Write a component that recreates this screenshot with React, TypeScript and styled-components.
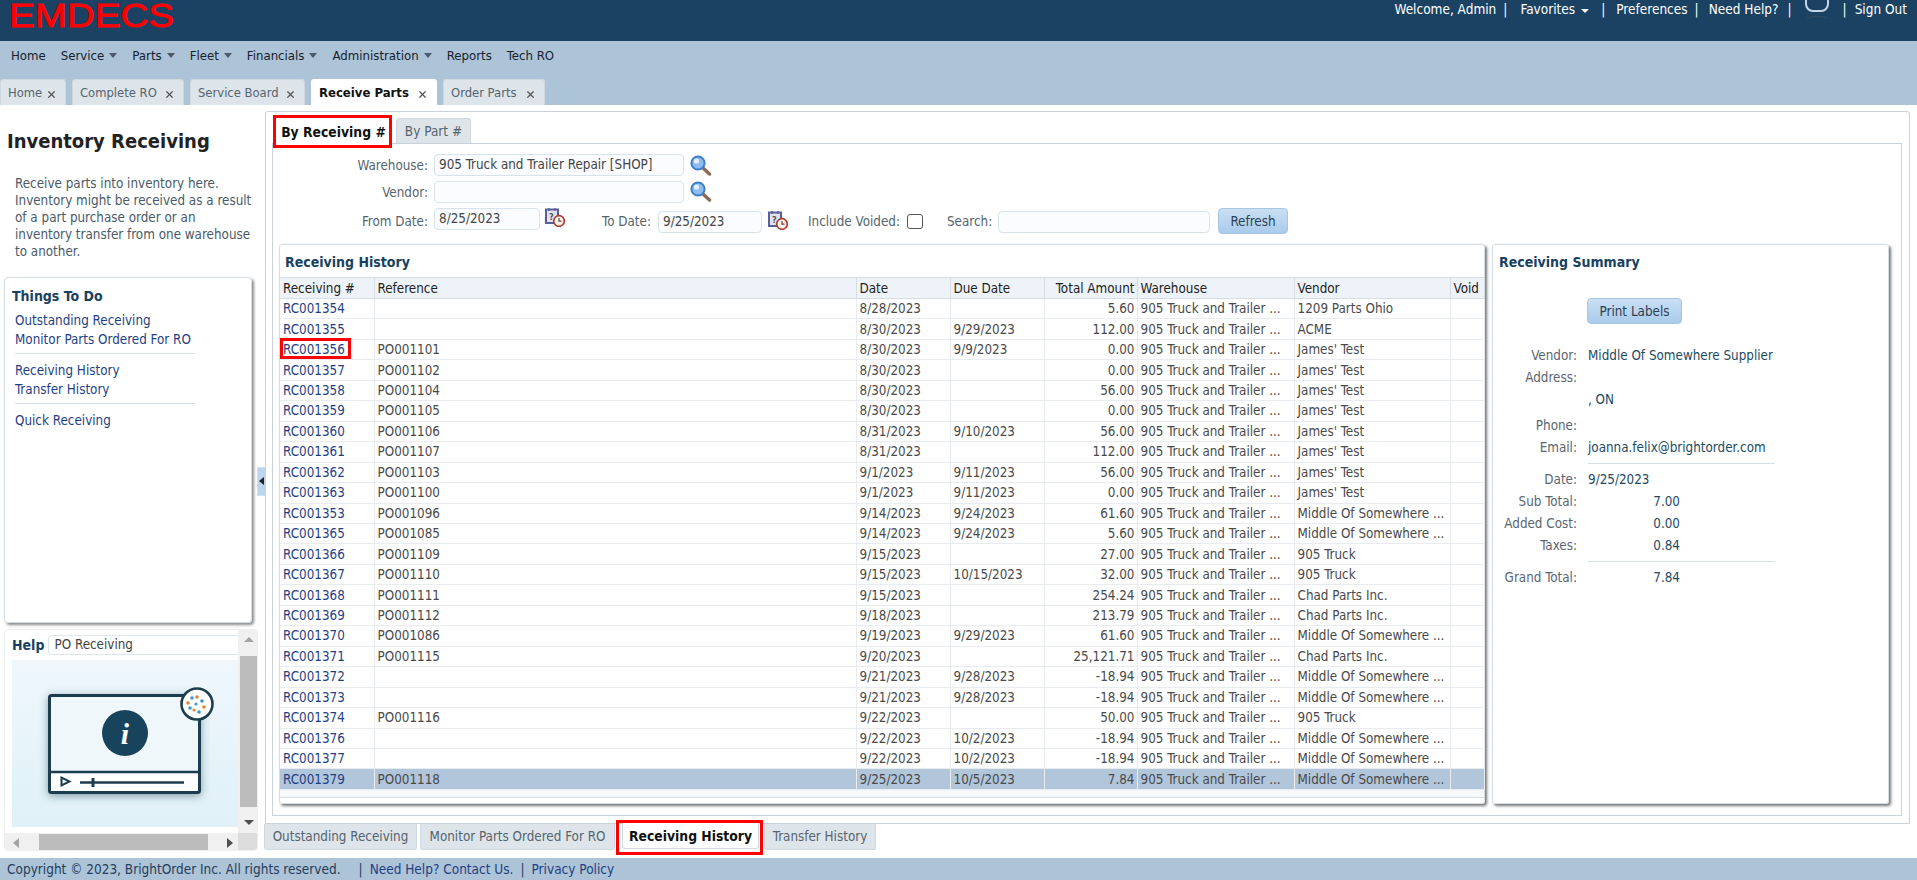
import React from 'react'
import styled, { createGlobalStyle } from 'styled-components'
import { X } from 'lucide-react'

const GlobalStyle = createGlobalStyle`
  html, body { margin: 0; padding: 0; background: #fff; }
  body {
    font-family: "DejaVu Sans Condensed", "Noto Sans", "Liberation Sans", sans-serif;
    font-stretch: condensed;
    font-size: 13.33px;
    color: #444;
  }
  * { box-sizing: border-box; }
`

const Page = styled.div`
  width: 1917px;
  height: 880px;
  display: flex;
  flex-direction: column;
  overflow: hidden;
`

const Header = styled.header`
  height: 41px;
  background: #1c4263;
  display: flex;
  justify-content: space-between;
  padding: 0 10px 0 8px;
  flex-shrink: 0;
`
const Logo = styled.svg`
  width: 172px;
  height: 34px;
  display: block;
`
const TopLinks = styled.div`
  display: flex;
  height: 14px;
  align-items: center;
  color: #fff;
  font-size: 13.5px;
  white-space: nowrap;
  margin-top: 2px;
`
const TopItem = styled.span<{ $gap?: number }>`
  margin-left: ${(p) => p.$gap ?? 0}px;
  display: inline-flex;
  align-items: center;
`
const WhiteCaret = styled.i`
  width: 0;
  height: 0;
  margin-left: 6px;
  margin-top: 3px;
  border-left: 4px solid transparent;
  border-right: 4px solid transparent;
  border-top: 4px solid #fff;
`

const Band = styled.div`
  height: 64px;
  background: #adc3d7;
  display: flex;
  flex-direction: column;
  justify-content: space-between;
  flex-shrink: 0;
`
const Menu = styled.nav`
  display: flex;
  padding: 6px 0 0 11px;
  gap: 15px;
  color: #15222e;
  font-size: 13.1px;
  line-height: 17px;
`
const MenuItem = styled.span`
  display: inline-flex;
  align-items: center;
`
const Caret = styled.i`
  width: 0;
  height: 0;
  margin-left: 5px;
  border-left: 4px solid transparent;
  border-right: 4px solid transparent;
  border-top: 5px solid #4a5a6a;
`
const PageTabs = styled.div`
  display: flex;
  gap: 6px;
`
const PageTab = styled.div<{ $active?: boolean; $width: number }>`
  width: ${(p) => p.$width}px;
  height: 26px;
  padding: 0 8px 0 7px;
  display: flex;
  align-items: center;
  justify-content: space-between;
  border-radius: 3px 3px 0 0;
  background: ${(p) => (p.$active ? '#fff' : '#dde4ea')};
  color: ${(p) => (p.$active ? '#111' : '#56646f')};
  font-weight: ${(p) => (p.$active ? 700 : 400)};
  font-size: ${(p) => (p.$active ? 13 : 12.9)}px;
  border: 1px solid ${(p) => (p.$active ? '#fff' : '#cfd8df')};
  border-bottom: 0;
  white-space: nowrap;
  svg { margin-top: 4px; color: #555; flex-shrink: 0; }
`

const Content = styled.main`
  flex: 1;
  display: flex;
  min-height: 0;
`
const Sidebar = styled.aside`
  width: 256px;
  flex-shrink: 0;
  display: flex;
  flex-direction: column;
  padding-left: 4px;
`
const SideTitle = styled.h1`
  margin: 24px 0 0 3px;
  font-size: 20px;
  line-height: 24px;
  font-weight: 700;
  color: #222;
`
const SideText = styled.p`
  margin: 22px 0 0 11px;
  width: 238px;
  line-height: 17px;
  color: #4a5a68;
`
const TodoCard = styled.section`
  width: 248px;
  height: 346px;
  margin-top: 17px;
  border: 1px solid #d5dde5;
  border-radius: 4px;
  box-shadow: 2px 2px 3px #8a8a8a;
  padding: 9px 0 0 7px;
`
const CardTitle = styled.h3`
  margin: 0;
  font-size: 14px;
  line-height: 18px;
  font-weight: 700;
  color: #17425f;
`
const TodoList = styled.div`
  margin: 6px 0 0 3px;
  width: 180px;
  display: flex;
  flex-direction: column;
`
const TodoLink = styled.a`
  color: #1f3f85;
  line-height: 19px;
  white-space: nowrap;
`
const Rule = styled.hr`
  margin: 4px 0 7px;
  border: 0;
  border-top: 1px solid #d5dde5;
  width: 100%;
`
const HelpPanel = styled.section`
  width: 254px;
  height: 222px;
  margin-top: 6px;
  display: grid;
  grid-template-columns: 233px 21px;
  grid-template-rows: 203px 19px;
  border: 1px solid #eceff2;
  border-radius: 4px;
  overflow: hidden;
  flex-shrink: 0;
`
const HelpBody = styled.div`
  overflow: hidden;
  padding: 5px 0 0 7px;
`
const HelpHead = styled.div`
  display: flex;
  align-items: center;
  gap: 4px;
  height: 20px;
`
const HelpLabel = styled.b`
  font-size: 14px;
  color: #17425f;
`
const HelpSelect = styled.div`
  flex: 1;
  height: 20px;
  border: 1px solid #dde6ee;
  border-right: 0;
  border-radius: 4px 0 0 4px;
  padding-left: 5px;
  line-height: 18px;
  color: #444;
`
const VideoBox = styled.div`
  margin-top: 5px;
  height: 167px;
  width: 226px;
  background: linear-gradient(#eff7fd, #dff1f7);
`
const VScroll = styled.div`
  background: #f0f0f0;
  display: flex;
  flex-direction: column;
  align-items: center;
  justify-content: space-between;
  padding: 7px 0 8px;
`
const VThumb = styled.div`
  width: 17px;
  height: 151px;
  background: #bcbcbc;
`
const HScroll = styled.div`
  background: #f0f0f0;
  display: flex;
  align-items: center;
  justify-content: space-between;
  padding: 0 5px 0 8px;
`
const HThumb = styled.div`
  width: 169px;
  height: 17px;
  background: #bcbcbc;
`
const Corner = styled.div`
  background: #dcdcdc;
`
const Arrow = styled.i<{ $dir: 'up' | 'down' | 'left' | 'right'; $light?: boolean }>`
  width: 0;
  height: 0;
  border: 5px solid transparent;
  ${(p) => {
    const c = p.$light ? '#a3a3a3' : '#505050'
    if (p.$dir === 'up') return `border-bottom: 5px solid ${c}; border-top: 0;`
    if (p.$dir === 'down') return `border-top: 5px solid ${c}; border-bottom: 0;`
    if (p.$dir === 'left') return `border-right: 6px solid ${c}; border-left: 0;`
    return `border-left: 6px solid ${c}; border-right: 0;`
  }}
`
const Handle = styled.div`
  width: 9px;
  height: 29px;
  align-self: center;
  margin: -1px -1px 0 1px;
  background: #bcd4ec;
  border: 1px solid #cfe0f0;
  display: flex;
  align-items: center;
  justify-content: center;
  flex-shrink: 0;
`
const HandleArrow = styled.i`
  width: 0;
  height: 0;
  border-top: 4px solid transparent;
  border-bottom: 4px solid transparent;
  border-right: 5px solid #222;
`

const MainColumn = styled.div`
  width: 1645px;
  padding-top: 6px;
  display: flex;
  flex-direction: column;
`
const OuterPanel = styled.div`
  height: 713px;
  border: 1px solid #c9d2da;
  border-radius: 3px 3px 0 0;
  padding: 6px 7px 7px 6px;
  display: flex;
  flex-direction: column;
`
const SubTabs = styled.div`
  display: flex;
  height: 25px;
  padding-left: 2px;
  gap: 7px;
  flex-shrink: 0;
`
const SubTab = styled.div<{ $active?: boolean }>`
  position: relative;
  width: ${(p) => (p.$active ? '115px' : '75px')};
  height: ${(p) => (p.$active ? '26px' : '25px')};
  padding-left: ${(p) => (p.$active ? '4px' : 0)};
  display: flex;
  align-items: center;
  justify-content: center;
  border-radius: 3px 3px 0 0;
  background: ${(p) => (p.$active ? '#fff' : '#dde4ea')};
  color: ${(p) => (p.$active ? '#111' : '#56646f')};
  font-weight: ${(p) => (p.$active ? 700 : 400)};
  font-size: ${(p) => (p.$active ? 13.8 : 13.5)}px;
  border: 1px solid ${(p) => (p.$active ? '#fff' : '#cfd8df')};
  border-bottom: 0;
  white-space: nowrap;
  z-index: 1;
`
const RedBox = styled.span<{ $inset: string }>`
  position: absolute;
  inset: ${(p) => p.$inset};
  border: 3px solid #f00;
  pointer-events: none;
`
const InnerPanel = styled.div`
  flex: 1;
  border: 1px solid #c9d2da;
  display: flex;
  flex-direction: column;
  padding: 10px 12px 11px 6px;
  min-height: 0;
`
const Form = styled.div`
  display: flex;
  flex-direction: column;
  gap: 5px;
  height: 90px;
  flex-shrink: 0;
`
const FormRow = styled.div`
  display: flex;
  align-items: flex-start;
`
const FieldLabel = styled.label<{ $width?: number; $ml?: number; $mt?: number }>`
  width: ${(p) => (p.$width ? `${p.$width}px` : 'auto')};
  margin-left: ${(p) => p.$ml ?? 0}px;
  margin-top: ${(p) => p.$mt ?? 3}px;
  text-align: right;
  color: #56646f;
  line-height: 17px;
  white-space: nowrap;
`
const TextInput = styled.div<{ $width: number; $ml?: number; $mt?: number }>`
  width: ${(p) => p.$width}px;
  height: 22px;
  margin-left: ${(p) => p.$ml ?? 6}px;
  margin-top: ${(p) => p.$mt ?? 0}px;
  border: 1px solid #d7e3ec;
  border-radius: 4px;
  background: #fafcff;
  padding-left: 4px;
  line-height: 20px;
  color: #444;
  white-space: nowrap;
`
const IconWrap = styled.span<{ $ml: number; $mt?: number }>`
  display: block;
  margin-left: ${(p) => p.$ml}px;
  margin-top: ${(p) => p.$mt ?? 0}px;
  line-height: 0;
`
const CheckBox = styled.span`
  width: 16px;
  height: 15px;
  margin: 6px 0 0 7px;
  border: 1px solid #555;
  border-radius: 3px;
  background: #fff;
`
const Button = styled.button<{ $width: number; $ml?: number }>`
  width: ${(p) => p.$width}px;
  height: 26px;
  margin-left: ${(p) => p.$ml ?? 0}px;
  border: 1px solid #a6c6e4;
  border-radius: 4px;
  background: linear-gradient(#c9dff4, #a9cbec);
  color: #2c4052;
  font: inherit;
  padding: 0;
`
const Panels = styled.div`
  flex: 1;
  display: flex;
  gap: 7px;
  min-height: 0;
`
const HistoryPanel = styled.section`
  width: 1206px;
  border: 1px solid #d5dde5;
  border-radius: 3px;
  box-shadow: 2px 2px 3px #777;
  display: flex;
  flex-direction: column;
`
const PanelTitle = styled.h3`
  margin: 0;
  height: 32px;
  line-height: 35px;
  padding-left: 5px;
  font-size: 14px;
  font-weight: 700;
  color: #17425f;
  flex-shrink: 0;
`
const Table = styled.table`
  width: 1204px;
  table-layout: fixed;
  border-collapse: collapse;
`
const Th = styled.th<{ $right?: boolean }>`
  height: 21px;
  padding: 0 2px 0 3px;
  background: #eef2f9;
  border-top: 1px solid #d5dde5;
  border-bottom: 1px solid #d5dde5;
  border-right: 1px solid #d5dde5;
  text-align: ${(p) => (p.$right ? 'right' : 'left')};
  font-weight: 400;
  color: #222;
  white-space: nowrap;
  overflow: hidden;
`
const Tr = styled.tr<{ $selected?: boolean }>`
  height: 20.46px;
  background: ${(p) => (p.$selected ? '#b1c5db' : '#fff')};
`
const Td = styled.td<{ $right?: boolean; $link?: boolean }>`
  position: relative;
  padding: 0 2px 0 3px;
  border-bottom: 1px solid #e8ebef;
  border-right: 1px solid #e8ebef;
  text-align: ${(p) => (p.$right ? 'right' : 'left')};
  color: ${(p) => (p.$link ? '#1f3f85' : '#4a4a4a')};
  white-space: nowrap;
  overflow: visible;
  line-height: 15px;
`
const TableEnd = styled.div`
  height: 8px;
  background: #f6f9fc;
  border-bottom: 1px solid #d5dde5;
`
const SummaryPanel = styled.section`
  width: 397px;
  border: 1px solid #d5dde5;
  border-radius: 3px;
  box-shadow: 2px 2px 3px #777;
  padding-left: 6px;
`
const SummaryTitle = styled(PanelTitle)`
  padding-left: 0;
`
const PrintRow = styled.div`
  margin: 21px 0 21px 88px;
`
const SummaryGrid = styled.dl`
  margin: 0 0 0 -6px;
  display: grid;
  grid-template-columns: 84px 187px;
  column-gap: 11px;
  align-items: start;
  line-height: 22px;
`
const Term = styled.dt`
  min-height: 22px;
  text-align: right;
  color: #5a6670;
  white-space: nowrap;
`
const Value = styled.dd<{ $amount?: boolean; $tall?: boolean }>`
  margin: 0 0 ${(p) => (p.$tall ? 4 : 0)}px;
  min-height: 22px;
  color: #1d4a63;
  white-space: nowrap;
  ${(p) => (p.$amount ? 'width: 92px; text-align: right;' : '')}
`
const GridRule = styled.hr`
  grid-column: 2;
  width: 187px;
  margin: 4px 0 5px;
  border: 0;
  border-top: 1px solid #d5dde5;
`

const BottomTabs = styled.div`
  display: flex;
  height: 26px;
  gap: 3px;
  flex-shrink: 0;
`
const BottomTab = styled.div<{ $active?: boolean; $width: number; $ml?: number }>`
  position: relative;
  width: ${(p) => p.$width}px;
  margin-left: ${(p) => p.$ml ?? 0}px;
  margin-top: ${(p) => (p.$active ? '-1px' : 0)};
  height: 26px;
  display: flex;
  align-items: center;
  justify-content: center;
  border-radius: 0 0 3px 3px;
  background: ${(p) => (p.$active ? '#fff' : '#dde4ea')};
  color: ${(p) => (p.$active ? '#111' : '#56646f')};
  font-weight: ${(p) => (p.$active ? 700 : 400)};
  font-size: ${(p) => (p.$active ? 13.8 : 13.33)}px;
  border: 1px solid #cfd8df;
  border-top: 0;
  white-space: nowrap;
`
const Footer = styled.footer`
  height: 22px;
  background: #adc3d7;
  display: flex;
  align-items: center;
  padding-left: 7px;
  color: #24405c;
  font-size: 13.5px;
  flex-shrink: 0;
  white-space: nowrap;
`
const FooterLink = styled.a`
  color: #1f3f85;
`
const FooterSep = styled.span<{ $ml: number }>`
  margin: 0 7px 0 ${(p) => p.$ml}px;
  color: #24405c;
`

const SearchIcon = () => (
  <svg width="22" height="21" viewBox="0 0 22 21">
    <path d="M12.5 12.5 L19.5 19" stroke="#8a6a55" strokeWidth="3.4" strokeLinecap="round" />
    <circle cx="8" cy="8" r="6.6" fill="#8dbdf0" stroke="#3f7fc8" strokeWidth="2" />
    <circle cx="6.5" cy="6" r="2.6" fill="#e4f1ff" />
  </svg>
)

const CalendarIcon = () => (
  <svg width="20" height="20" viewBox="0 0 20 20">
    <rect x="1" y="2.5" width="12" height="13.5" fill="#dfe3f0" stroke="#5a5f99" strokeWidth="2" />
    <path d="M4 1v3M10 1v3" stroke="#5a5f99" strokeWidth="1.4" />
    <text x="4" y="13" fontSize="9" fontWeight="700" fill="#555">?</text>
    <circle cx="14" cy="14" r="5.3" fill="#fdf8f2" stroke="#b33a2c" strokeWidth="1.7" />
    <path d="M14 11v3.2h2.6" stroke="#7a3a22" strokeWidth="1.2" fill="none" />
  </svg>
)

const ChatIcon = () => (
  <svg width="26" height="20" viewBox="0 0 26 20">
    <rect x="2" y="-5" width="22" height="17" rx="7" fill="none" stroke="#c4d6e6" strokeWidth="2" />
    <path d="M3 19c5-2 15-2 20 0" stroke="#2d4a63" strokeWidth="1.4" fill="none" />
  </svg>
)

const VideoArt = () => (
  <svg width="226" height="167" viewBox="0 0 226 167">
    <defs>
      <filter id="soft" x="-10%" y="-10%" width="120%" height="125%">
        <feDropShadow dx="0" dy="2" stdDeviation="4" floodColor="#355566" floodOpacity="0.55" />
      </filter>
    </defs>
    <rect x="37.5" y="35.5" width="150" height="97" rx="2" fill="#f0f7fb" stroke="#1c3d4f" strokeWidth="3" filter="url(#soft)" />
    <rect x="39" y="112" width="147" height="19" fill="#fff" />
    <path d="M38 112h150" stroke="#1c3d4f" strokeWidth="2.4" />
    <circle cx="113" cy="73" r="23" fill="#17445c" />
    <text x="113" y="84" textAnchor="middle" fontFamily="'Liberation Serif', serif" fontStyle="italic" fontWeight="700" fontSize="30" fill="#fff">i</text>
    <path d="M49.5 117.5v8l8-4z" fill="none" stroke="#1c3d4f" strokeWidth="2" />
    <path d="M68 122.5h104" stroke="#1c3d4f" strokeWidth="2.4" />
    <path d="M81 118v9" stroke="#1c3d4f" strokeWidth="3" />
    <circle cx="185" cy="44" r="15.5" fill="#fff" stroke="#1c3d4f" strokeWidth="2.6" />
    <g fill="#3f97c9">
      <circle cx="180" cy="38" r="1.8" />
      <circle cx="190" cy="41" r="1.8" />
      <circle cx="178" cy="48" r="1.8" />
      <circle cx="187" cy="52" r="1.8" />
      <circle cx="184" cy="44" r="1.6" />
    </g>
    <g fill="#e8803a">
      <circle cx="185" cy="37" r="1.8" />
      <circle cx="176" cy="43" r="1.8" />
      <circle cx="192" cy="47" r="1.8" />
      <circle cx="182" cy="50" r="1.6" />
    </g>
  </svg>
)

const WH = '905 Truck and Trailer ...'
const MID = 'Middle Of Somewhere ...'
const JT = "James' Test"
const TR = '905 Truck'
const CH = 'Chad Parts Inc.'

const rows: string[][] = [
  ['RC001354', '', '8/28/2023', '', '5.60', '1209 Parts Ohio'],
  ['RC001355', '', '8/30/2023', '9/29/2023', '112.00', 'ACME'],
  ['RC001356', 'PO001101', '8/30/2023', '9/9/2023', '0.00', JT],
  ['RC001357', 'PO001102', '8/30/2023', '', '0.00', JT],
  ['RC001358', 'PO001104', '8/30/2023', '', '56.00', JT],
  ['RC001359', 'PO001105', '8/30/2023', '', '0.00', JT],
  ['RC001360', 'PO001106', '8/31/2023', '9/10/2023', '56.00', JT],
  ['RC001361', 'PO001107', '8/31/2023', '', '112.00', JT],
  ['RC001362', 'PO001103', '9/1/2023', '9/11/2023', '56.00', JT],
  ['RC001363', 'PO001100', '9/1/2023', '9/11/2023', '0.00', JT],
  ['RC001353', 'PO001096', '9/14/2023', '9/24/2023', '61.60', MID],
  ['RC001365', 'PO001085', '9/14/2023', '9/24/2023', '5.60', MID],
  ['RC001366', 'PO001109', '9/15/2023', '', '27.00', TR],
  ['RC001367', 'PO001110', '9/15/2023', '10/15/2023', '32.00', TR],
  ['RC001368', 'PO001111', '9/15/2023', '', '254.24', CH],
  ['RC001369', 'PO001112', '9/18/2023', '', '213.79', CH],
  ['RC001370', 'PO001086', '9/19/2023', '9/29/2023', '61.60', MID],
  ['RC001371', 'PO001115', '9/20/2023', '', '25,121.71', CH],
  ['RC001372', '', '9/21/2023', '9/28/2023', '-18.94', MID],
  ['RC001373', '', '9/21/2023', '9/28/2023', '-18.94', MID],
  ['RC001374', 'PO001116', '9/22/2023', '', '50.00', TR],
  ['RC001376', '', '9/22/2023', '10/2/2023', '-18.94', MID],
  ['RC001377', '', '9/22/2023', '10/2/2023', '-18.94', MID],
  ['RC001379', 'PO001118', '9/25/2023', '10/5/2023', '7.84', MID],
]

const colWidths = [94, 482, 94, 94, 93, 157, 156, 34]
const pageTabs: [string, number][] = [
  ['Home', 66],
  ['Complete RO', 112],
  ['Service Board', 115],
  ['Receive Parts', 126],
  ['Order Parts', 102],
]

const App = () => (
  <Page>
    <GlobalStyle />
    <Header>
      <Logo viewBox="0 0 172 34">
        <text
          x="1"
          y="27"
          textLength="165"
          lengthAdjust="spacingAndGlyphs"
          fontFamily="'Liberation Sans', sans-serif"
          fontSize="33"
          fill="#f00"
          stroke="#f00"
          strokeWidth="0.8"
        >
          EMDECS
        </text>
      </Logo>
      <TopLinks>
        <TopItem>Welcome, Admin</TopItem>
        <TopItem $gap={7}>|</TopItem>
        <TopItem $gap={13}>Favorites<WhiteCaret /></TopItem>
        <TopItem $gap={12}>|</TopItem>
        <TopItem $gap={11}>Preferences</TopItem>
        <TopItem $gap={7}>|</TopItem>
        <TopItem $gap={10}>Need Help?</TopItem>
        <TopItem $gap={9}>|</TopItem>
        <TopItem $gap={12}><ChatIcon /></TopItem>
        <TopItem $gap={13}>|</TopItem>
        <TopItem $gap={8}>Sign Out</TopItem>
      </TopLinks>
    </Header>

    <Band>
      <Menu>
        <MenuItem>Home</MenuItem>
        {['Service', 'Parts', 'Fleet', 'Financials', 'Administration'].map((m) => (
          <MenuItem key={m}>{m}<Caret /></MenuItem>
        ))}
        <MenuItem>Reports</MenuItem>
        <MenuItem>Tech RO</MenuItem>
      </Menu>
      <PageTabs>
        {pageTabs.map(([t, w]) => (
          <PageTab key={t} $width={w} $active={t === 'Receive Parts'}>
            {t}
            <X size={11} strokeWidth={2.6} />
          </PageTab>
        ))}
      </PageTabs>
    </Band>

    <Content>
      <Sidebar>
        <SideTitle>Inventory Receiving</SideTitle>
        <SideText>
          Receive parts into inventory here.<br />
          Inventory might be received as a result<br />
          of a part purchase order or an<br />
          inventory transfer from one warehouse<br />
          to another.
        </SideText>
        <TodoCard>
          <CardTitle>Things To Do</CardTitle>
          <TodoList>
            <TodoLink>Outstanding Receiving</TodoLink>
            <TodoLink>Monitor Parts Ordered For RO</TodoLink>
            <Rule />
            <TodoLink>Receiving History</TodoLink>
            <TodoLink>Transfer History</TodoLink>
            <Rule />
            <TodoLink>Quick Receiving</TodoLink>
          </TodoList>
        </TodoCard>
        <HelpPanel>
          <HelpBody>
            <HelpHead>
              <HelpLabel>Help</HelpLabel>
              <HelpSelect>PO Receiving</HelpSelect>
            </HelpHead>
            <VideoBox><VideoArt /></VideoBox>
          </HelpBody>
          <VScroll>
            <Arrow $dir="up" $light />
            <VThumb />
            <Arrow $dir="down" />
          </VScroll>
          <HScroll>
            <Arrow $dir="left" $light />
            <HThumb />
            <Arrow $dir="right" />
          </HScroll>
          <Corner />
        </HelpPanel>
      </Sidebar>

      <Handle><HandleArrow /></Handle>

      <MainColumn>
        <OuterPanel>
          <SubTabs>
            <SubTab $active>
              By Receiving #
              <RedBox $inset="-4px -4px -4px -2px" />
            </SubTab>
            <SubTab>By Part #</SubTab>
          </SubTabs>
          <InnerPanel>
            <Form>
              <FormRow>
                <FieldLabel $width={149}>Warehouse:</FieldLabel>
                <TextInput $width={250}>905 Truck and Trailer Repair [SHOP]</TextInput>
                <IconWrap $ml={6} $mt={1}><SearchIcon /></IconWrap>
              </FormRow>
              <FormRow>
                <FieldLabel $width={149}>Vendor:</FieldLabel>
                <TextInput $width={250} />
                <IconWrap $ml={6}><SearchIcon /></IconWrap>
              </FormRow>
              <FormRow>
                <FieldLabel $width={149} $mt={5}>From Date:</FieldLabel>
                <TextInput $width={106}>8/25/2023</TextInput>
                <IconWrap $ml={5} $mt={-1}><CalendarIcon /></IconWrap>
                <FieldLabel $width={86} $mt={5}>To Date:</FieldLabel>
                <TextInput $width={104} $ml={7} $mt={3}>9/25/2023</TextInput>
                <IconWrap $ml={6} $mt={2}><CalendarIcon /></IconWrap>
                <FieldLabel $width={95} $ml={17} $mt={5}>Include Voided:</FieldLabel>
                <CheckBox />
                <FieldLabel $width={45} $ml={24} $mt={5}>Search:</FieldLabel>
                <TextInput $width={212} $mt={3}></TextInput>
                <Button $width={70} $ml={8}>Refresh</Button>
              </FormRow>
            </Form>
            <Panels>
              <HistoryPanel>
                <PanelTitle>Receiving History</PanelTitle>
                <Table>
                  <colgroup>
                    {colWidths.map((w, i) => <col key={i} width={w} />)}
                  </colgroup>
                  <thead>
                    <tr>
                      <Th>Receiving #</Th>
                      <Th>Reference</Th>
                      <Th>Date</Th>
                      <Th>Due Date</Th>
                      <Th $right>Total Amount</Th>
                      <Th>Warehouse</Th>
                      <Th>Vendor</Th>
                      <Th>Void</Th>
                    </tr>
                  </thead>
                  <tbody>
                    {rows.map((r) => (
                      <Tr key={r[0]} $selected={r[0] === 'RC001379'}>
                        <Td $link>
                          {r[0]}
                          {r[0] === 'RC001356' && <RedBox $inset="-2px 23px 0 0" />}
                        </Td>
                        <Td>{r[1]}</Td>
                        <Td>{r[2]}</Td>
                        <Td>{r[3]}</Td>
                        <Td $right>{r[4]}</Td>
                        <Td>{WH}</Td>
                        <Td>{r[5]}</Td>
                        <Td />
                      </Tr>
                    ))}
                  </tbody>
                </Table>
                <TableEnd />
              </HistoryPanel>
              <SummaryPanel>
                <SummaryTitle>Receiving Summary</SummaryTitle>
                <PrintRow><Button $width={95}>Print Labels</Button></PrintRow>
                <SummaryGrid>
                  <Term>Vendor:</Term><Value>Middle Of Somewhere Supplier</Value>
                  <Term>Address:</Term><Value />
                  <Term /><Value $tall>, ON</Value>
                  <Term>Phone:</Term><Value />
                  <Term>Email:</Term><Value>joanna.felix@brightorder.com</Value>
                  <GridRule />
                  <Term>Date:</Term><Value>9/25/2023</Value>
                  <Term>Sub Total:</Term><Value $amount>7.00</Value>
                  <Term>Added Cost:</Term><Value $amount>0.00</Value>
                  <Term>Taxes:</Term><Value $amount>0.84</Value>
                  <GridRule />
                  <Term>Grand Total:</Term><Value $amount>7.84</Value>
                </SummaryGrid>
              </SummaryPanel>
            </Panels>
          </InnerPanel>
        </OuterPanel>
        <BottomTabs>
          <BottomTab $width={153} $ml={-1}>Outstanding Receiving</BottomTab>
          <BottomTab $width={195}>Monitor Parts Ordered For RO</BottomTab>
          <BottomTab $active $width={137} $ml={4}>
            Receiving History
            <RedBox $inset="-3px -5px -7px -7px" />
          </BottomTab>
          <BottomTab $width={112} $ml={2}>Transfer History</BottomTab>
        </BottomTabs>
      </MainColumn>
    </Content>

    <Footer>
      Copyright © 2023, BrightOrder Inc. All rights reserved.
      <FooterSep $ml={18}>|</FooterSep>
      <FooterLink>Need Help? Contact Us.</FooterLink>
      <FooterSep $ml={7}>|</FooterSep>
      <FooterLink>Privacy Policy</FooterLink>
    </Footer>
  </Page>
)

export default App
